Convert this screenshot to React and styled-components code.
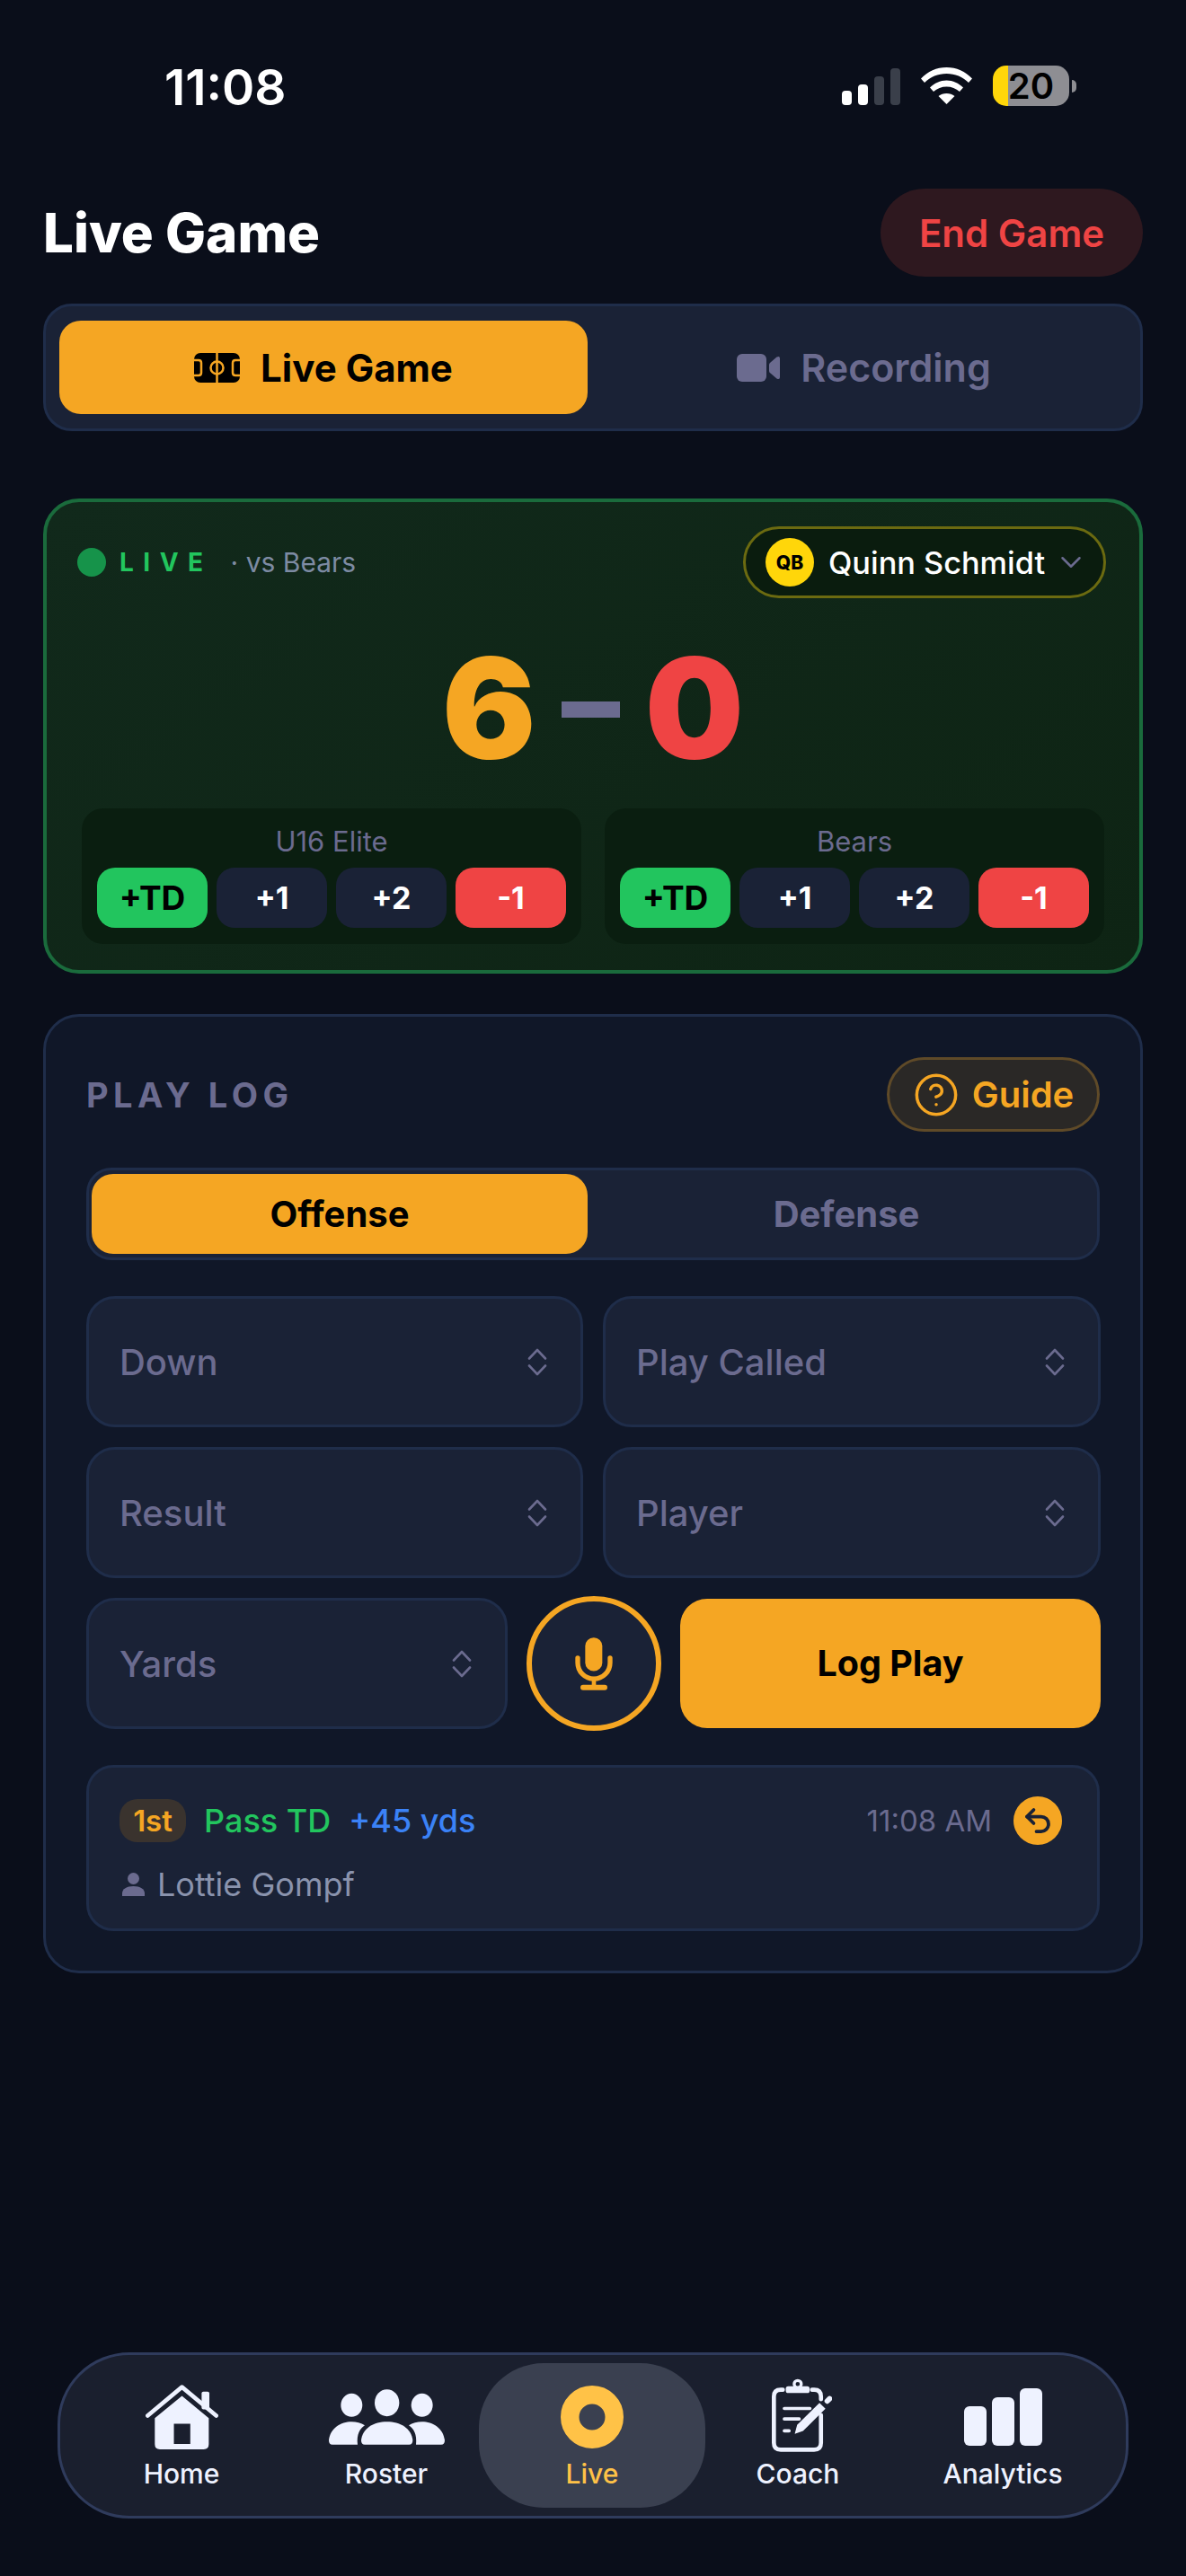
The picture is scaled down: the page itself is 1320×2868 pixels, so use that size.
import React from 'react'
import styled, { createGlobalStyle } from 'styled-components'
import { CircleHelp, Undo2, ChevronDown } from 'lucide-react'

const GlobalStyle = createGlobalStyle`
    * { box-sizing: border-box; }
    html, body { margin: 0; background: #0a0e1a; }
    body { font-family: Inter, "Liberation Sans", sans-serif; }
`

const AMBER = '#f5a623'
const MUTED = '#6b6b8f'
const FIELD = '#1a2236'
const LINE = '#1f2d4a'

const Page = styled.div`
    width: 1320px;
    height: 2868px;
    padding: 0 48px;
    position: relative;
    overflow: hidden;
`

const StatusBar = styled.div`
    height: 210px;
    padding: 73px 74px 0 135px;
    display: flex;
    justify-content: space-between;
    align-items: flex-start;
`

const Clock = styled.div`
    color: #fff;
    font-size: 55px;
    font-weight: 600;
    line-height: 48px;
`

const StatusIcons = styled.div`
    display: flex;
    align-items: center;
    gap: 23px;
`

const Signal = styled.div`
    display: flex;
    align-items: flex-end;
    gap: 7px;
    height: 41px;
    margin-top: 2px;
`

const SignalBar = styled.div`
    width: 11px;
    height: ${(p) => p.$h}px;
    border-radius: 4px;
    background: ${(p) => (p.$on ? '#fff' : '#3a3f4a')};
`

const Battery = styled.div`
    width: 85px;
    height: 45px;
    border-radius: 15px;
    display: flex;
    align-items: center;
    justify-content: center;
    background: linear-gradient(90deg, #ffd60a 0 17px, #8e8e93 17px);
    color: #000;
    font-size: 40px;
    line-height: 1;
    font-weight: 600;
`

const BatteryWrap = styled.div`
    display: flex;
    align-items: center;
    gap: 3px;
`

const BatteryNub = styled.div`
    width: 5px;
    height: 14px;
    border-radius: 0 5px 5px 0;
    background: #8e8e93;
`

const Header = styled.div`
    height: 98px;
    display: flex;
    justify-content: space-between;
    align-items: center;
    margin-bottom: 30px;
`

const Title = styled.h1`
    margin: 0;
    color: #fff;
    font-size: 60px;
    font-weight: 800;
`

const EndButton = styled.div`
    width: 292px;
    height: 98px;
    border-radius: 49px;
    background: #2e181f;
    color: #ef4444;
    font-size: 42px;
    font-weight: 600;
    display: flex;
    align-items: center;
    justify-content: center;
`

const MainTabs = styled.div`
    height: 142px;
    border: 3px solid ${LINE};
    border-radius: 32px;
    background: ${FIELD};
    padding: 16px 0 16px 15px;
    display: grid;
    grid-template-columns: 588px 1fr;
    margin-bottom: 75px;
`

const Tab = styled.div`
    border-radius: 24px;
    background: ${(p) => (p.$active ? AMBER : 'transparent')};
    color: ${(p) => (p.$active ? '#000' : MUTED)};
    font-weight: ${(p) => p.$weight || 600};
    font-size: ${(p) => p.$size || 42}px;
    display: flex;
    align-items: center;
    justify-content: center;
    gap: 23px;
`

const ScoreCard = styled.section`
    height: 529px;
    border: 4px solid #1a6b3c;
    border-radius: 40px;
    background: linear-gradient(145deg, #11291b, #0e2414);
    padding: 27px 39px;
    margin-bottom: 45px;
`

const TopRow = styled.div`
    display: flex;
    justify-content: space-between;
    align-items: center;
    height: 80px;
    margin: 0 -2px 0 -5px;
`

const LiveInfo = styled.div`
    display: flex;
    align-items: center;
`

const LiveDot = styled.div`
    width: 32px;
    height: 32px;
    border-radius: 50%;
    background: #16934a;
    margin-right: 15px;
`

const LiveLabel = styled.span`
    color: #22c55e;
    font-size: 28px;
    font-weight: 700;
    letter-spacing: 10.5px;
    margin-right: 20px;
`

const VsLabel = styled.span`
    color: #7d8ba3;
    font-size: 30px;
`

const PlayerPill = styled.div`
    width: 404px;
    height: 80px;
    border: 3px solid #6b6a10;
    border-radius: 40px;
    background: #0a1c0e;
    display: flex;
    align-items: center;
    padding-left: 22px;
    color: #fff;
    font-size: 34.3px;
    font-weight: 500;
`

const PosBadge = styled.div`
    width: 54px;
    height: 54px;
    border-radius: 50%;
    background: #ffd60a;
    color: #000;
    font-size: 21px;
    font-weight: 800;
    display: flex;
    align-items: center;
    justify-content: center;
    margin-right: 16px;
`

const PillChevron = styled(ChevronDown)`
    margin-left: 10px;
`

const ScoreRow = styled.div`
    height: 234px;
    display: flex;
    align-items: center;
    justify-content: center;
    gap: 28px;
    font-size: 155px;
    font-weight: 900;
    line-height: 1;
`

const Digit = styled.span`
    color: ${(p) => p.$color};
    margin-top: 8px;
`

const Dash = styled.div`
    width: 65px;
    height: 18px;
    margin-top: 14px;
    background: ${MUTED};
`

const Teams = styled.div`
    display: grid;
    grid-template-columns: 1fr 1fr;
    gap: 26px;
`

const TeamPanel = styled.div`
    height: 151px;
    border-radius: 24px;
    background: #0a1e10;
    padding: 18px 17px;
`

const TeamName = styled.div`
    height: 36px;
    margin-bottom: 12px;
    color: ${MUTED};
    font-size: 31px;
    line-height: 38px;
    text-align: center;
`

const ScoreButtons = styled.div`
    display: grid;
    grid-template-columns: repeat(4, 1fr);
    gap: 10px;
`

const scoreColors = {
    td: ['#22c55e', '#000'],
    add: [FIELD, '#fff'],
    minus: ['#ef4444', '#fff'],
}

const ScoreButton = styled.div`
    height: 67px;
    border-radius: 20px;
    background: ${(p) => scoreColors[p.$kind][0]};
    color: ${(p) => scoreColors[p.$kind][1]};
    font-size: ${(p) => (p.$kind === 'td' ? 37 : 34)}px;
    font-weight: 700;
    display: flex;
    align-items: center;
    justify-content: center;
`

const LogCard = styled.section`
    height: 1068px;
    border: 3px solid ${LINE};
    border-radius: 40px;
    background: #101728;
    padding: 45px;
`

const LogHeader = styled.div`
    height: 83px;
    display: flex;
    justify-content: space-between;
    align-items: center;
    margin-bottom: 40px;
`

const LogTitle = styled.h2`
    margin: 0;
    color: ${MUTED};
    font-size: 38px;
    font-weight: 700;
    letter-spacing: 5.5px;
`

const GuideButton = styled.div`
    width: 237px;
    height: 83px;
    border: 3px solid #5f4a28;
    border-radius: 42px;
    background: #2a2826;
    color: ${AMBER};
    font-size: 40px;
    font-weight: 600;
    display: flex;
    align-items: center;
    justify-content: center;
    gap: 14px;
`

const SideTabs = styled.div`
    height: 103px;
    border: 3px solid ${LINE};
    border-radius: 28px;
    background: ${FIELD};
    padding: 4px 0 4px 3px;
    display: grid;
    grid-template-columns: 552px 576px;
    margin-bottom: 40px;
`

const Selects = styled.div`
    display: grid;
    grid-template-columns: 553px 554px;
    gap: 22px;
`

const Select = styled.div`
    height: 146px;
    border: 3px solid ${LINE};
    border-radius: 32px;
    background: ${FIELD};
    color: ${MUTED};
    font-size: 40px;
    font-weight: 500;
    padding: 0 37px 0 34px;
    display: flex;
    align-items: center;
    justify-content: space-between;
`

const ActionRow = styled.div`
    grid-column: 1 / -1;
    display: grid;
    grid-template-columns: 469px 150px 1fr;
    gap: 21px;
    align-items: center;
    margin: -2px 0 38px;
`

const MicButton = styled.div`
    width: 150px;
    height: 150px;
    border: 6px solid ${AMBER};
    border-radius: 50%;
    background: ${FIELD};
    display: flex;
    align-items: center;
    justify-content: center;
`

const LogButton = styled.div`
    height: 144px;
    border-radius: 30px;
    background: ${AMBER};
    color: #000;
    font-size: 39.5px;
    font-weight: 700;
    display: flex;
    align-items: center;
    justify-content: center;
`

const Entry = styled.div`
    height: 185px;
    border: 3px solid ${LINE};
    border-radius: 30px;
    background: ${FIELD};
    padding: 32px 39px 0 34px;
`

const EntryTop = styled.div`
    display: flex;
    align-items: center;
    height: 54px;
    margin-bottom: 24px;
    font-size: 36px;
    font-weight: 500;
`

const DownBadge = styled.span`
    width: 74px;
    height: 48px;
    border-radius: 20px;
    background: #3a332e;
    color: ${AMBER};
    font-size: 33px;
    font-weight: 600;
    display: flex;
    align-items: center;
    justify-content: center;
    margin-right: 20px;
`

const EntryText = styled.span`
    color: ${(p) => p.$color};
    margin-right: 20px;
`

const EntryTime = styled.span`
    margin-left: auto;
    margin-right: 24px;
    color: ${MUTED};
    font-size: 33px;
    font-weight: 400;
`

const UndoButton = styled.div`
    width: 54px;
    height: 54px;
    border-radius: 50%;
    background: ${AMBER};
    display: flex;
    align-items: center;
    justify-content: center;
`

const EntryPlayer = styled.div`
    display: flex;
    align-items: center;
    gap: 14px;
    padding-left: 3px;
    height: 40px;
    color: #8a93ad;
    font-size: 36px;
`

const Nav = styled.nav`
    position: absolute;
    left: 64px;
    right: 64px;
    bottom: 64px;
    height: 185px;
    border: 3px solid #2f3b5c;
    border-radius: 80px;
    background: #1a1f2e;
    padding: 9px 21px;
    display: flex;
`

const NavItem = styled.div`
    flex: ${(p) => (p.$active ? '0 0 252px' : '0 0 228px')};
    margin: ${(p) => (p.$active ? '0 -11px' : '0')};
    height: 161px;
    padding-top: 15px;
    border-radius: 72px;
    background: ${(p) => (p.$active ? '#3a4050' : 'transparent')};
    color: ${(p) => (p.$active ? '#ffc247' : '#eef2ff')};
    display: flex;
    flex-direction: column;
    align-items: center;
`

const NavIcon = styled.div`
    height: 90px;
    display: flex;
    align-items: center;
    justify-content: center;
`

const NavLabel = styled.div`
    font-size: 30px;
    font-weight: 500;
    line-height: 36px;
`

const CoachSvg = styled.svg`
    margin: 0 0 5px 8px;
`

const SignalIcon = () => (
    <Signal>
        <SignalBar $h={16} $on />
        <SignalBar $h={23} $on />
        <SignalBar $h={32} />
        <SignalBar $h={41} />
    </Signal>
)

const WifiIcon = () => (
    <svg width="57" height="41" viewBox="0 0 57 41" fill="#fff">
        <path d="M0 12.5C7.5 4.5 17.5 0 28.5 0S49.500 4.500 57 12.5L53 17C46.500 10.500 38 7 28.500 7S10.500 10.500 4 17Z" />
        <path d="M10 22.500C15 17.500 21.500 14.500 28.500 14.500S42 17.500 47 22.500L43 27C39 23.500 34 21.500 28.500 21.500S18 23.500 14 27Z" />
        <path d="M19.500 32C22 30 25 29 28.500 29S35 30 37.500 32L28.500 41Z" />
    </svg>
)

const FieldIcon = () => (
    <svg width="51" height="33" viewBox="0 0 51 33">
        <rect width="51" height="33" rx="7" fill="#000" />
        <g fill="none" stroke={AMBER} strokeWidth="2.500">
            <path d="M25.500 0V33" />
            <circle cx="25.500" cy="16.500" r="7" />
            <path d="M0 8H5Q8 8 8 11V22Q8 25 5 25H0" />
            <path d="M51 8H46Q43 8 43 11V22Q43 25 46 25H51" />
        </g>
    </svg>
)

const VideoIcon = () => (
    <svg width="48" height="31" viewBox="0 0 48 31" fill={MUTED}>
        <rect width="33" height="31" rx="6" />
        <path d="M36 12Q36 10.500 37.500 9.500L44.500 3.500Q48 2 48 5V26Q48 29 44.500 27.500L37.500 21.500Q36 20.500 36 19Z" />
    </svg>
)

const UpDownIcon = () => (
    <svg width="22" height="31" viewBox="0 0 22 31" fill="none" stroke={MUTED} strokeWidth="2.600" strokeLinecap="round" strokeLinejoin="round">
        <path d="M2 11.500 11 2l9 9.500" />
        <path d="M2 19.500 11 29l9-9.500" />
    </svg>
)

const MicIcon = () => (
    <svg width="42" height="59" viewBox="0 0 126 176" fill="none" stroke={AMBER} strokeLinecap="round">
        <rect x="34" width="57" height="112" rx="28" fill={AMBER} stroke="none" />
        <path d="M9 68V84a54 54 0 0 0 108 0V68" strokeWidth="16" />
        <path d="M63 138V166" strokeWidth="14" />
        <path d="M27 167H99" strokeWidth="18" />
    </svg>
)

const PersonIcon = () => (
    <svg width="25" height="26" viewBox="0 0 25 26" fill={MUTED}>
        <circle cx="12.500" cy="6.500" r="6.500" />
        <path d="M0 23C0 18 5 15 12.500 15S25 18 25 23V26H0Z" />
    </svg>
)

const HomeIcon = () => (
    <svg width="81" height="72" viewBox="0 0 244 217">
        <path d="M7 104 122 8 237 104" fill="none" stroke="#eef2ff" strokeWidth="14" strokeLinecap="round" strokeLinejoin="round" />
        <rect x="188" y="23" width="26" height="60" rx="6" fill="#eef2ff" />
        <path fillRule="evenodd" fill="#eef2ff" d="M122 38 212 112V200Q212 217 195 217H48Q31 217 31 200V112ZM95 131V199H150V131Z" />
    </svg>
)

const RosterIcon = () => (
    <svg width="129" height="62" viewBox="0 0 387 185" fill="#eef2ff">
        <ellipse cx="76" cy="53" rx="36" ry="39" />
        <ellipse cx="194" cy="45" rx="41" ry="45" />
        <ellipse cx="311" cy="53" rx="36" ry="39" />
        <path d="M120 185Q108 185 108 170C112 130 150 108 194 108S276 130 280 170Q280 185 268 185Z" />
        <path d="M12 185Q0 185 0 170C4 130 40 108 76 108C92 108 108 112 120 120C104 130 92 150 96 185Z" />
        <path d="M375 185Q387 185 387 170C383 130 347 108 311 108C295 108 279 112 267 120C283 130 295 150 291 185Z" />
    </svg>
)

const LiveIcon = () => (
    <svg width="70" height="70" viewBox="0 0 70 70">
        <circle cx="35" cy="35" r="24.750" fill="none" stroke="#ffc247" strokeWidth="20.500" />
    </svg>
)

const CoachIcon = () => (
    <CoachSvg width="67" height="83" viewBox="0 0 202 248" fill="none" stroke="#eef2ff" strokeLinecap="round">
        <path d="M37 40H30Q7 40 7 63V218Q7 241 30 241H142Q165 241 165 218V125M135 40H142Q165 40 165 63V72" strokeWidth="14" />
        <rect x="47" y="28" width="80" height="23" rx="8" fill="#eef2ff" stroke="none" />
        <circle cx="87" cy="21" r="12" strokeWidth="10" />
        <path d="M42 103H128M42 138H92M42 178H58" strokeWidth="11" />
        <path d="M77 188 85 158 160 84 180 104 105 178Z" fill="#eef2ff" stroke="none" />
        <path d="M186 78 194 70" strokeWidth="18" />
    </CoachSvg>
)

const AnalyticsIcon = () => (
    <svg width="87" height="64" viewBox="0 0 87 64" fill="#eef2ff">
        <rect y="20" width="25" height="44" rx="6" />
        <rect x="31" y="10" width="25" height="54" rx="6" />
        <rect x="62" width="25" height="64" rx="6" />
    </svg>
)

const navItems = [
    { label: 'Home', Icon: HomeIcon },
    { label: 'Roster', Icon: RosterIcon },
    { label: 'Live', Icon: LiveIcon, active: true },
    { label: 'Coach', Icon: CoachIcon },
    { label: 'Analytics', Icon: AnalyticsIcon },
]

const TeamControls = ({ name }) => (
    <TeamPanel>
        <TeamName>{name}</TeamName>
        <ScoreButtons>
            <ScoreButton $kind="td">+TD</ScoreButton>
            <ScoreButton $kind="add">+1</ScoreButton>
            <ScoreButton $kind="add">+2</ScoreButton>
            <ScoreButton $kind="minus">-1</ScoreButton>
        </ScoreButtons>
    </TeamPanel>
)

export default function App() {
    return (
        <Page>
            <GlobalStyle />
            <StatusBar>
                <Clock>11:08</Clock>
                <StatusIcons>
                    <SignalIcon />
                    <WifiIcon />
                    <BatteryWrap>
                        <Battery>20</Battery>
                        <BatteryNub />
                    </BatteryWrap>
                </StatusIcons>
            </StatusBar>

            <Header>
                <Title>Live Game</Title>
                <EndButton>End Game</EndButton>
            </Header>

            <MainTabs>
                <Tab $active $weight={700}><FieldIcon />Live Game</Tab>
                <Tab $size={43}><VideoIcon />Recording</Tab>
            </MainTabs>

            <ScoreCard>
                <TopRow>
                    <LiveInfo>
                        <LiveDot />
                        <LiveLabel>LIVE</LiveLabel>
                        <VsLabel>· vs Bears</VsLabel>
                    </LiveInfo>
                    <PlayerPill>
                        <PosBadge>QB</PosBadge>
                        Quinn Schmidt
                        <PillChevron size={38} color={MUTED} strokeWidth={1.6} />
                    </PlayerPill>
                </TopRow>
                <ScoreRow>
                    <Digit $color={AMBER}>6</Digit>
                    <Dash />
                    <Digit $color="#ef4444">0</Digit>
                </ScoreRow>
                <Teams>
                    <TeamControls name="U16 Elite" />
                    <TeamControls name="Bears" />
                </Teams>
            </ScoreCard>

            <LogCard>
                <LogHeader>
                    <LogTitle>PLAY LOG</LogTitle>
                    <GuideButton><CircleHelp size={52} strokeWidth={1.6} />Guide</GuideButton>
                </LogHeader>
                <SideTabs>
                    <Tab $active $weight={700} $size={40}>Offense</Tab>
                    <Tab $weight={700} $size={40}>Defense</Tab>
                </SideTabs>
                <Selects>
                    <Select>Down<UpDownIcon /></Select>
                    <Select>Play Called<UpDownIcon /></Select>
                    <Select>Result<UpDownIcon /></Select>
                    <Select>Player<UpDownIcon /></Select>
                    <ActionRow>
                        <Select>Yards<UpDownIcon /></Select>
                        <MicButton><MicIcon /></MicButton>
                        <LogButton>Log Play</LogButton>
                    </ActionRow>
                </Selects>
                <Entry>
                    <EntryTop>
                        <DownBadge>1st</DownBadge>
                        <EntryText $color="#22c55e">Pass TD</EntryText>
                        <EntryText $color="#3b82f6">+45 yds</EntryText>
                        <EntryTime>11:08 AM</EntryTime>
                        <UndoButton><Undo2 size={36} color={FIELD} strokeWidth={2.5} /></UndoButton>
                    </EntryTop>
                    <EntryPlayer><PersonIcon />Lottie Gompf</EntryPlayer>
                </Entry>
            </LogCard>

            <Nav>
                {navItems.map(({ label, Icon, active }) => (
                    <NavItem key={label} $active={active}>
                        <NavIcon><Icon /></NavIcon>
                        <NavLabel>{label}</NavLabel>
                    </NavItem>
                ))}
            </Nav>
        </Page>
    )
}
